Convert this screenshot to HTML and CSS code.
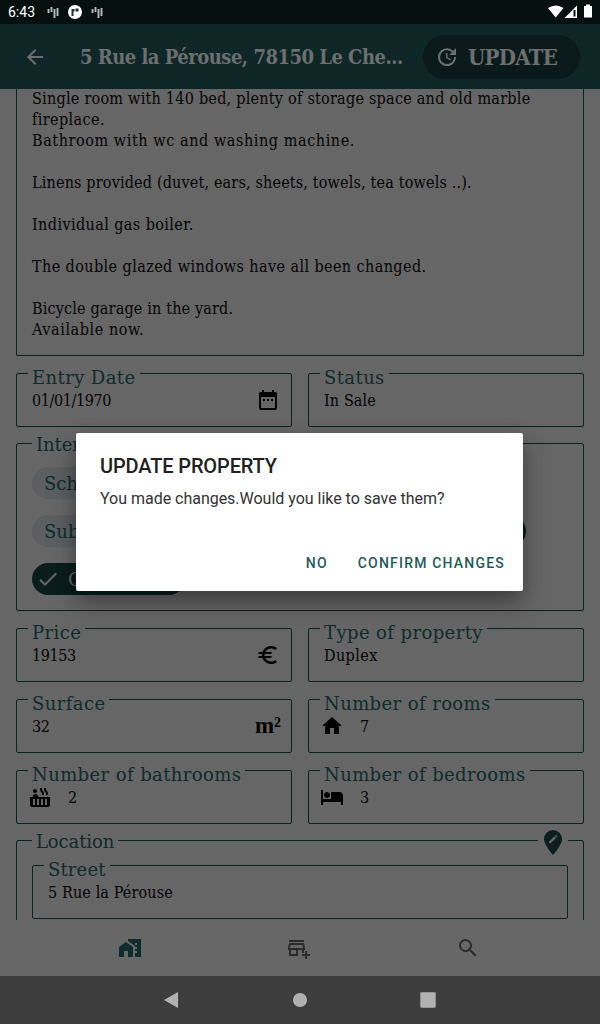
FILE: index.html
```html
<!DOCTYPE html>
<html lang="en">
<head>
<meta charset="utf-8">
<title>Update property</title>
<link rel="stylesheet" href="styles.css">
</head>
<body>
<div class="screen">
  <header class="status">
    <span class="clock">6:43</span>
    <svg class="st-icon" viewBox="0 0 14 14"><path d="M2.500 4v4M5.500 2v5M8.500 4v9M11.500 3v8" /></svg>
    <svg class="st-round" viewBox="0 0 14 14"><circle cx="7" cy="7" r="7" fill="#fff"/><path d="M3.500 4h3v2.500H5.500V11h-2zM7.500 3.500h3v3h-3z" fill="#26302f"/></svg>
    <svg class="st-icon" viewBox="0 0 14 14"><path d="M2.500 4v4M5.500 2v5M8.500 4v9M11.500 3v8" /></svg>
    <svg class="st-right" viewBox="0 0 46 16"><path d="M0 4Q8-1 15.500 4L7.700 13.500zM16.500 14L29 1.500V14z" fill="#fff"/><path d="M25.500 6h2v6.500h-2z" fill="#06100f"/><path d="M36 2h2V.5h4V2h2v11.500h-8z" fill="#fff"/></svg>
  </header>
  <div class="appbar">
    <svg class="back" viewBox="0 0 24 24"><path d="M20 11H7.830l5.590-5.590L12 4l-8 8 8 8 1.410-1.410L7.830 13H20v-2z"/></svg>
    <h1 class="title">5 Rue la Pérouse, 78150 Le Che...</h1>
    <button class="update">
      <svg class="update-icon" viewBox="0 0 24 24"><path d="M21 10.120h-6.780l2.740-2.820c-2.730-2.700-7.150-2.800-9.880-.1a6.875 6.875 0 0 0 0 9.790 7.020 7.020 0 0 0 9.880 0C18.320 15.650 19 14.080 19 12.100h2c0 1.980-.88 4.550-2.640 6.290-3.510 3.480-9.210 3.480-12.720 0-3.500-3.470-3.530-9.110-.02-12.580a8.987 8.987 0 0 1 12.650 0L21 3v7.120zM12.500 8v4.250l3.500 2.080-.72 1.210L11 13V8h1.500z"/></svg>
      <span class="update-text">UPDATE</span>
    </button>
  </div>
  <main class="content">
    <section class="description">
      <p class="line first">Single room with 140 bed, plenty of storage space and old marble</p>
      <p class="line">fireplace.</p>
      <p class="line wide">Bathroom with wc and washing machine.</p>
      <p class="line gap narrow">Linens provided (duvet, ears, sheets, towels, tea towels ..).</p>
      <p class="line gap">Individual gas boiler.</p>
      <p class="line gap">The double glazed windows have all been changed.</p>
      <p class="line gap narrow">Bicycle garage in the yard.</p>
      <p class="line wide">Available now.</p>
    </section>
    <div class="row">
      <div class="field"><span class="label">Entry Date</span><span class="value num">01/01/1970</span>
        <svg class="icon end" viewBox="0 0 24 24"><path d="M9 11H7v2h2v-2zm4 0h-2v2h2v-2zm4 0h-2v2h2v-2zm2-7h-1V2h-2v2H8V2H6v2H5c-1.110 0-1.990.9-1.990 2L3 20a2 2 0 0 0 2 2h14c1.100 0 2-.9 2-2V6c0-1.100-.9-2-2-2zm0 16H5V9h14v11z"/></svg></div>
      <div class="field"><span class="label">Status</span><span class="value">In Sale</span></div>
    </div>
    <section class="group interests">
      <span class="group-label">Interests</span>
      <div class="chips">
        <div class="chip-row"><span class="chip">School</span></div>
        <div class="chip-row"><span class="chip">Subway</span><span class="chip on park">Park</span></div>
        <div class="chip-row"><span class="chip on green"><svg class="check" viewBox="0 0 24 24"><path d="M9 16.170L4.830 12l-1.420 1.410L9 19 21 7l-1.410-1.410z"/></svg>Green</span></div>
      </div>
    </section>
    <div class="row">
      <div class="field"><span class="label">Price</span><span class="value num">19153</span>
        <svg class="icon end" viewBox="0 0 24 24"><path d="M15 18.500c-2.510 0-4.680-1.420-5.760-3.500H15l1-2H8.580c-.05-.33-.08-.66-.08-1s.03-.67.080-1H15l1-2H9.240C10.320 6.920 12.500 5.500 15 5.500c1.610 0 3.090.59 4.230 1.570L21 5.300C19.410 3.870 17.300 3 15 3c-3.920 0-7.240 2.510-8.480 6H3l-1 2h4.060a8.262 8.262 0 0 0 0 2H3l-1 2h4.520c1.240 3.490 4.560 6 8.480 6 2.310 0 4.410-.87 6-2.300l-1.780-1.770c-1.130.98-2.600 1.570-4.220 1.570z"/></svg></div>
      <div class="field"><span class="label">Type of property</span><span class="value loose">Duplex</span></div>
    </div>
    <div class="row">
      <div class="field"><span class="label">Surface</span><span class="value num">32</span><span class="unit">m²</span></div>
      <div class="field lead"><span class="label">Number of rooms</span>
        <svg class="icon" viewBox="0 0 24 24"><path d="M10 20v-6h4v6h5v-8h3L12 3 2 12h3v8z"/></svg><span class="value num">7</span></div>
    </div>
    <div class="row">
      <div class="field lead"><span class="label">Number of bathrooms</span>
        <svg class="icon" viewBox="0 0 24 24"><circle cx="7" cy="6" r="2"/><path d="M11.150 12c-.31-.22-.59-.46-.82-.72l-1.400-1.550c-.19-.21-.43-.38-.69-.5-.31-.15-.65-.23-1-.23C6 9.010 5 10.010 5 11.250V12H2v8c0 1.100.9 2 2 2h16c1.100 0 2-.9 2-2v-8H11.150zM7 20H5v-6h2v6zm4 0H9v-6h2v6zm4 0h-2v-6h2v6zm4 0h-2v-6h2v6zm-.35-14.140l-.07-.07c-.57-.62-.82-1.410-.67-2.200L18 3h-1.890l-.06.430c-.2 1.360.270 2.710 1.300 3.720l.07.060c.57.620.82 1.410.67 2.200l-.11.590h1.910l.06-.43c.21-1.360-.27-2.710-1.300-3.710zm-4 0l-.07-.07c-.57-.62-.82-1.410-.67-2.200L14 3h-1.890l-.06.430c-.2 1.360.27 2.710 1.300 3.720l.07.060c.57.620.82 1.410.67 2.200l-.11.590h1.910l.06-.43c.21-1.360-.27-2.710-1.300-3.710z"/></svg><span class="value num">2</span></div>
      <div class="field lead"><span class="label">Number of bedrooms</span>
        <svg class="icon" viewBox="0 0 24 24"><path d="M7 13c1.660 0 3-1.340 3-3S8.660 7 7 7s-3 1.340-3 3 1.340 3 3 3zm12-6h-8v7H3V5H1v15h2v-3h18v3h2v-9a4 4 0 0 0-4-4z"/></svg><span class="value num">3</span></div>
    </div>
    <section class="group location">
      <span class="group-label">Location</span>
      <span class="pin"><svg class="pin-icon" viewBox="0 0 18 25"><path d="M9 0a9 9 0 0 0-9 9c0 6 9 16 9 16s9-10 9-16a9 9 0 0 0-9-9z"/><path class="pencil" d="M5 11.500L10.300 6.300l1.700 1.700L6.700 13.200H5zM10.900 5.700l.9-.9 1.700 1.700-.9.900z"/></svg></span>
      <div class="field"><span class="label street">Street</span><span class="value">5 Rue la Pérouse</span></div>
    </section>
  </main>
  <nav class="tabs">
    <svg class="tab active" viewBox="0 0 24 24"><path d="M1 11v10h5v-6h4v6h5V11L8 6z"/><path fill-rule="evenodd" d="M10 3v1.970l7 5V21h6V3H10zM17 7h2v2h-2zM17 11h2v2h-2zM17 15h2v2h-2z"/></svg>
    <svg class="tab" viewBox="0 0 24 24"><path d="M2 4h15v2H2zM15 17h2v-3h1v-2l-1-5H2l-1 5v2h1v6h9v-6h4v3zm-6 1H4v-4h5v4zm-5.960-6l.6-3h11.720l.6 3H3.040zM20 18v-3h-2v3h-3v2h3v3h2v-3h3v-2z"/></svg>
    <svg class="tab" viewBox="0 0 24 24"><path d="M15.500 14h-.79l-.28-.27A6.471 6.471 0 0 0 16 9.500 6.500 6.500 0 1 0 9.500 16c1.610 0 3.090-.59 4.230-1.570l.27.280v.79l5 4.990L20.490 19l-4.990-5zm-6 0C7.010 14 5 11.990 5 9.500S7.010 5 9.500 5 14 7.010 14 9.500 11.990 14 9.500 14z"/></svg>
  </nav>
  <footer class="system">
    <svg class="sys" viewBox="0 0 16 16"><path d="M15 0v16L1 8z"/></svg>
    <svg class="sys" viewBox="0 0 16 16"><circle cx="8" cy="8" r="7"/></svg>
    <svg class="sys" viewBox="0 0 16 16"><rect x=".3" y=".3" width="15.400" height="15.400" rx="1"/></svg>
  </footer>
  <div class="dialog" role="dialog">
    <h2 class="dialog-title">UPDATE PROPERTY</h2>
    <p class="dialog-text">You made changes.Would you like to save them?</p>
    <div class="actions"><button class="action">NO</button><button class="action">CONFIRM CHANGES</button></div>
  </div>
</div>
</body>
</html>
```
FILE: styles.css
```css
* { box-sizing: border-box; }
body, h1, h2, p { margin: 0; }
button { border: 0; padding: 0; background: none; font: inherit; color: inherit; }
svg { display: block; flex: none; }
.screen {
  position: relative; width: 600px; height: 1024px; overflow: hidden;
  display: flex; flex-direction: column; background: #666; color: #040404;
  font-family: "Roboto Slab", "DejaVu Serif Condensed", "DejaVu Serif", serif;
}
.status { height: 24px; flex: none; display: flex; align-items: center; background: #06100f; color: #fff; padding: 0 6px 0 8px; }
.clock { font: 14px/24px Roboto, sans-serif; width: 38px; }
.st-icon { width: 14px; height: 14px; fill: none; stroke: #b5baba; stroke-width: 1.9; }
.st-round { width: 14px; height: 14px; margin: 0 8px; }
.st-right { width: 46px; height: 16px; margin-left: auto; margin-top: -1px; }
.appbar { height: 65px; flex: none; display: flex; align-items: center; background: #0f2626; color: #6b6f6f; padding: 0 20px 0 23px; }
.back { width: 24px; height: 24px; fill: #6b6f6f; }
.title { font-size: 20px; line-height: 26px; font-weight: 700; margin-left: 33px; width: 343px; white-space: nowrap; letter-spacing: -0.5px; }
.update { width: 157px; height: 44px; border-radius: 22px; background: #0a1a1a; display: flex; align-items: center; padding-left: 12px; gap: 9px; }
.update-icon { width: 24px; height: 24px; fill: #6b6f6f; }
.update-text { font-size: 22px; font-weight: 700; letter-spacing: -0.7px; }
.content { height: 831px; flex: none; padding: 0 16px; overflow: hidden; display: flex; flex-direction: column; }
.description { height: 267px; flex: none; border: 1px solid #0c2221; border-top: 0; border-radius: 0 0 2px 2px; padding: 0 15px; }
.line { font-size: 16px; line-height: 21px; white-space: nowrap; letter-spacing: 0.41px; }
.first { margin-top: -1px; letter-spacing: 0.25px; }
.wide { letter-spacing: 0.58px; }
.narrow { letter-spacing: 0.17px; }
.gap { margin-top: 21px; }
.row { display: grid; grid-template-columns: 1fr 1fr; gap: 16px; margin-top: 17px; flex: none; }
.field { position: relative; height: 54px; border: 1px solid #0c2221; border-radius: 2px; padding: 0 11px 0 15px; display: flex; align-items: center; }
.label, .group-label, .chip { font-family: "Roboto Slab", "DejaVu Serif", serif; font-size: 18px; color: #0f2b2b; white-space: nowrap; }
.label { position: absolute; left: 11px; top: -8px; padding: 0 4px; background: #666; line-height: 24px; letter-spacing: 0.4px; }
.street { letter-spacing: 0.15px; }
.value { font-size: 16px; line-height: 21px; letter-spacing: 0.12px; white-space: nowrap; }
.num { letter-spacing: -0.4px; }
.loose { letter-spacing: 0.4px; }
.icon { width: 24px; height: 24px; fill: #000; }
.end { margin-left: auto; }
.unit { margin-left: auto; margin-right: -1px; font: 700 23px/24px "Liberation Serif", serif; }
.lead { padding-left: 11px; gap: 16px; }
.group { position: relative; border: 1px solid #0c2221; border-radius: 2px; flex: none; }
.group-label { position: absolute; left: 15px; top: -11px; padding: 0 4px; background: #666; line-height: 24px; letter-spacing: -0.1px; }
.interests { height: 168px; margin-top: 16px; }
.chips { display: flex; flex-direction: column; gap: 16px; padding: 23px 15px; }
.chip-row { display: flex; gap: 8px; justify-content: space-between; }
.chip { height: 32px; border-radius: 16px; background: #5b5f62; line-height: 33px; letter-spacing: 0; padding: 0 12px; }
.on { background: #0a1d1c; color: #666; }
.park { width: 90px; margin-right: 42px; }
.green { width: 153px; display: flex; padding-left: 4px; }
.check { width: 24px; height: 24px; margin: 4px 8px 0 0; fill: #666; }
.location { height: 100px; margin-top: 16px; padding: 24px 15px; }
.pin { position: absolute; right: 15px; top: -11px; padding: 0 6px; background: #666; }
.pin-icon { width: 18px; height: 25px; fill: #0a1f1e; }
.pencil { fill: #666; }
.tabs { height: 56px; flex: none; display: flex; justify-content: space-between; align-items: center; padding: 0 120px 0 118px; background: #676767; }
.tab { width: 24px; height: 24px; fill: #2b2b2b; }
.active { fill: #0f2b2b; }
.system { height: 48px; flex: none; display: flex; justify-content: space-between; align-items: center; padding: 0 164px 0 163px; background: #3d3d3d; }
.sys { width: 16px; height: 16px; fill: #b1b1b1; }
.dialog { position: absolute; left: 76px; top: 433px; width: 447px; height: 158px; background: #fff; border-radius: 2px; padding: 20px 11px 0 24px; box-shadow: 0 11px 15px -7px rgba(0,0,0,.2), 0 14px 24px 2px rgba(0,0,0,.2), 0 4px 20px 3px rgba(0,0,0,.1); font-family: Roboto, sans-serif; }
.dialog-title { font-size: 20px; line-height: 26px; font-weight: 500; letter-spacing: -0.13px; color: #212121; }
.dialog-text { font-size: 16px; line-height: 20px; margin-top: 10px; letter-spacing: -0.02px; color: #333; white-space: nowrap; }
.actions { display: flex; justify-content: flex-end; gap: 15px; margin-top: 36px; }
.action { font-size: 14px; font-weight: 500; line-height: 36px; letter-spacing: 1.2px; color: #1e5b5b; padding: 0 7px 0 8px; }
```
